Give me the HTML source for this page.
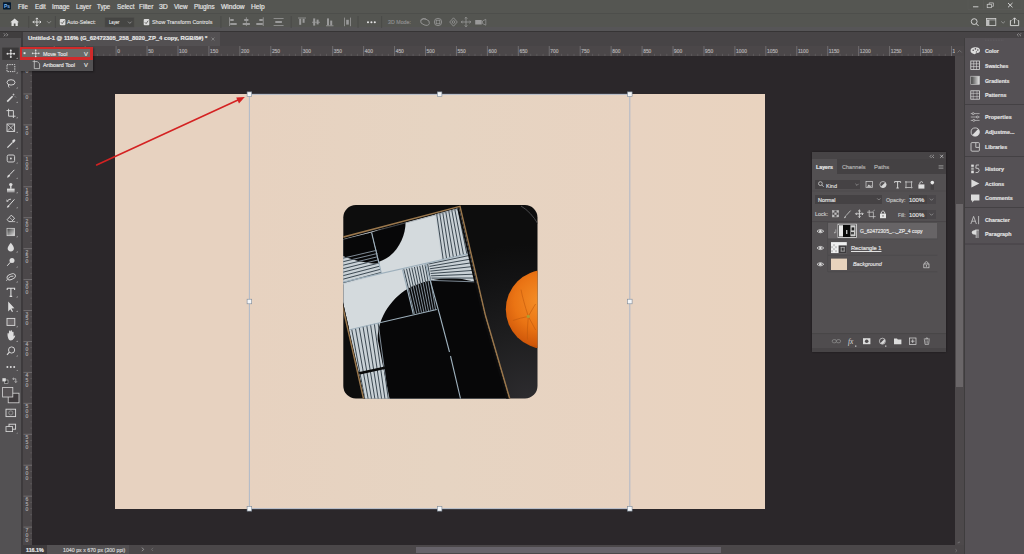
<!DOCTYPE html>
<html><head><meta charset="utf-8">
<style>
html,body{margin:0;padding:0;}
body{width:1024px;height:554px;overflow:hidden;position:relative;background:#2b272a;font-family:"Liberation Sans",sans-serif;color:#e6e6e6;}
.a{position:absolute;}
.t{position:absolute;white-space:pre;line-height:1;transform-origin:0 0;-webkit-text-stroke:0.18px currentColor;}
svg{position:absolute;left:0;top:0;}
</style></head><body>
<div class="a" style="left:0px;top:0px;width:1024px;height:13px;background:#555652;"></div>
<div class="a" style="left:0px;top:13px;width:1024px;height:1px;background:#4d4e4b;"></div>
<div class="a" style="left:0px;top:14px;width:1024px;height:17px;background:#545551;"></div>
<div class="a" style="left:0px;top:27px;width:1024px;height:4px;background:#565557;"></div>
<div class="a" style="left:0px;top:31px;width:1024px;height:1px;background:#363435;"></div>
<div class="a" style="left:21px;top:32px;width:944px;height:14px;background:#474446;"></div>
<div class="a" style="left:23px;top:32px;width:197px;height:14px;background:#535052;"></div>
<div class="a" style="left:0px;top:32px;width:21px;height:522px;background:#535153;"></div>
<div class="a" style="left:0px;top:32px;width:21px;height:6px;background:#403e3f;"></div>
<div class="a" style="left:21px;top:32px;width:2px;height:522px;background:#3d3a3c;"></div>
<div class="a" style="left:23px;top:46px;width:941px;height:10px;background:#4b4749;"></div>
<div class="a" style="left:23px;top:56px;width:9px;height:489px;background:#4b4749;"></div>
<div class="a" style="left:32px;top:56px;width:923px;height:489px;background:#2b272a;"></div>
<div class="a" style="left:955px;top:56px;width:10px;height:489px;background:#4d494b;"></div>
<div class="a" style="left:956px;top:204px;width:7px;height:183px;background:#6a6668;"></div>
<div class="a" style="left:21px;top:545px;width:944px;height:9px;background:#4b4749;"></div>
<div class="a" style="left:21px;top:545px;width:26px;height:9px;background:#3f3c3e;"></div>
<div class="a" style="left:47px;top:545px;width:82px;height:9px;background:#545153;"></div>
<div class="a" style="left:416px;top:547px;width:305px;height:6px;background:#67636a;"></div>
<div class="a" style="left:965px;top:32px;width:59px;height:6px;background:#474446;"></div>
<div class="a" style="left:964px;top:38px;width:60px;height:516px;background:#555155;"></div>
<div class="a" style="left:964px;top:38px;width:1px;height:516px;background:#3f3d3e;"></div>
<svg width="1024" height="554" viewBox="0 0 1024 554">
<defs><linearGradient id="docg" x1="0" y1="0" x2="1" y2="0"><stop offset="0" stop-color="#e7d2c0"/><stop offset="0.2" stop-color="#e7d2c0"/><stop offset="0.5" stop-color="#e6d4c2"/><stop offset="0.8" stop-color="#e8d3c1"/><stop offset="1" stop-color="#e9d3bf"/></linearGradient><radialGradient id="tbl" cx="0.95" cy="1.0" r="0.8"><stop offset="0" stop-color="#2d2c2f"/><stop offset="0.45" stop-color="#1d1d1e"/><stop offset="0.8" stop-color="#121213"/><stop offset="1" stop-color="#0d0d0d"/></radialGradient><radialGradient id="org" cx="0.45" cy="0.4" r="0.62"><stop offset="0" stop-color="#f59028"/><stop offset="0.55" stop-color="#ea7414"/><stop offset="0.9" stop-color="#d0580a"/><stop offset="1" stop-color="#a84606"/></radialGradient><clipPath id="imgc"><rect x="343.3" y="205.1" width="194.2" height="193.4" rx="12.5"/></clipPath></defs>
<rect x="115" y="94" width="650" height="415" fill="url(#docg)"/>
<defs><clipPath id="prc"><polygon points="329.50,242.60 459.00,208.00 484.30,316.00 508.20,398.00 516.00,430.00 372.00,430.00"/></clipPath><clipPath id="archc"><path d="M395.8 430 L377.7 339.6 C377.5 318 392 296 412 286.5 C428 279.5 446 276.5 462 279 C470 280.5 476 282 482 284 L530 284 L530 440 L392 440 Z"/><path d="M371.6 232.5 L405.5 220 C406.5 236 397 256 379 261.7 Z"/><path d="M327 243 L371.6 232.5 L378.7 264 C365 263 352 260 343 256 L327 252 Z"/></clipPath></defs>
<g clip-path="url(#imgc)">
<rect x="343" y="205" width="195" height="194" fill="url(#tbl)"/>
<path d="M521 206 Q531 212 538 224" fill="none" stroke="#4a4a4c" stroke-width="1"/>
<circle cx="545.2" cy="309.3" r="39.4" fill="url(#org)"/>
<g stroke="#c25a0c" stroke-width="0.8" fill="none" opacity="0.8"><path d="M528.3 316.4 Q523 300 521 289.6 M528.3 316.4 Q520 318 512.9 320.5 M528.3 316.4 Q527 330 527.4 339.6 M528.3 316.4 Q533 325 535.6 330 M528.3 316.4 Q533 308 535.6 304"/></g>
<circle cx="528.3" cy="316.4" r="1.7" fill="#b09a30"/>
<polygon points="327.90,241.10 460.00,206.30 485.50,315.80 509.50,398.00 517.50,430.00 370.60,430.00" fill="#0b0b0c" stroke="#9a774c" stroke-width="1.5"/>
<g clip-path="url(#prc)">
<polygon points="329.50,242.60 459.00,208.00 484.30,316.00 508.20,398.00 516.00,430.00 372.00,430.00" fill="#d4dadd"/>
<polygon points="330.00,259.50 376.50,248.70 381.50,274.00 330.00,288.00" fill="#c9d1d6"/>
<path d="M330.00 261.28 L376.81 250.28 M330.00 264.84 L377.44 253.44 M330.00 268.41 L378.06 256.61 M330.00 271.97 L378.69 259.77 M330.00 275.53 L379.31 262.93 M330.00 279.09 L379.94 266.09 M330.00 282.66 L380.56 269.26 M330.00 286.22 L381.19 272.42" stroke="#34404a" stroke-width="0.95"/>
<polygon points="435.00,213.00 462.00,206.00 472.00,253.00 441.50,259.80" fill="#c9d1d6"/>
<path d="M436.50 212.61 L443.19 259.42 M439.50 211.83 L446.58 258.67 M442.50 211.06 L449.97 257.91 M445.50 210.28 L453.36 257.16 M448.50 209.50 L456.75 256.40 M451.50 208.72 L460.14 255.64 M454.50 207.94 L463.53 254.89 M457.50 207.17 L466.92 254.13 M460.50 206.39 L470.31 253.38" stroke="#34404a" stroke-width="0.95"/>
<polygon points="425.50,263.50 476.00,252.00 480.00,284.00 431.40,281.50" fill="#c9d1d6"/>
<path d="M425.87 264.62 L476.25 254.00 M426.61 266.88 L476.75 258.00 M427.34 269.12 L477.25 262.00 M428.08 271.38 L477.75 266.00 M428.82 273.62 L478.25 270.00 M429.56 275.88 L478.75 274.00 M430.29 278.12 L479.25 278.00 M431.03 280.38 L479.75 282.00" stroke="#34404a" stroke-width="0.95"/>
<polygon points="402.50,269.50 429.00,263.80 436.80,309.50 413.30,314.00" fill="#c9d1d6"/>
<path d="M403.82 269.21 L414.48 313.77 M406.48 268.64 L416.82 313.32 M409.12 268.07 L419.18 312.88 M411.77 267.50 L421.53 312.43 M414.43 266.94 L423.88 311.98 M417.07 266.37 L426.23 311.52 M419.73 265.80 L428.57 311.07 M422.38 265.23 L430.93 310.62 M425.02 264.66 L433.28 310.18 M427.68 264.09 L435.62 309.73" stroke="#34404a" stroke-width="0.95"/>
<polygon points="346.00,330.40 380.00,322.60 394.00,430.00 366.00,430.00" fill="#c9d1d6"/>
<path d="M347.89 329.97 L367.56 430.00 M351.67 329.10 L370.67 430.00 M355.44 328.23 L373.78 430.00 M359.22 327.37 L376.89 430.00 M363.00 326.50 L380.00 430.00 M366.78 325.63 L383.11 430.00 M370.56 324.77 L386.22 430.00 M374.33 323.90 L389.33 430.00 M378.11 323.03 L392.44 430.00" stroke="#34404a" stroke-width="0.95"/>
<path d="M327 243 L371.6 232.5 L378.7 264 C365 263 352 260 343 256 L327 252 Z" fill="#070708"/>
<path d="M371.6 232.5 L405.5 220 C406.5 236 397 256 379 261.7 Z" fill="#070708"/>
<path d="M395.8 430 L377.7 339.6 C377.5 318 392 296 412 286.5 C428 279.5 446 276.5 462 279 C470 280.5 476 282 482 284 L530 284 L530 440 L392 440 Z" fill="#070708"/>
<g clip-path="url(#archc)">
<path d="M330.00 261.28 L376.81 250.28 M330.00 264.84 L377.44 253.44 M330.00 268.41 L378.06 256.61 M330.00 271.97 L378.69 259.77 M330.00 275.53 L379.31 262.93 M330.00 279.09 L379.94 266.09 M330.00 282.66 L380.56 269.26 M330.00 286.22 L381.19 272.42" stroke="#8c9aa6" stroke-width="0.9"/>
<path d="M425.87 264.62 L476.25 254.00 M426.61 266.88 L476.75 258.00 M427.34 269.12 L477.25 262.00 M428.08 271.38 L477.75 266.00 M428.82 273.62 L478.25 270.00 M429.56 275.88 L478.75 274.00 M430.29 278.12 L479.25 278.00 M431.03 280.38 L479.75 282.00" stroke="#8c9aa6" stroke-width="0.9"/>
<path d="M403.82 269.21 L414.48 313.77 M406.48 268.64 L416.82 313.32 M409.12 268.07 L419.18 312.88 M411.77 267.50 L421.53 312.43 M414.43 266.94 L423.88 311.98 M417.07 266.37 L426.23 311.52 M419.73 265.80 L428.57 311.07 M422.38 265.23 L430.93 310.62 M425.02 264.66 L433.28 310.18 M427.68 264.09 L435.62 309.73" stroke="#8c9aa6" stroke-width="0.9"/>
<path d="M347.89 329.97 L367.56 430.00 M351.67 329.10 L370.67 430.00 M355.44 328.23 L373.78 430.00 M359.22 327.37 L376.89 430.00 M363.00 326.50 L380.00 430.00 M366.78 325.63 L383.11 430.00 M370.56 324.77 L386.22 430.00 M374.33 323.90 L389.33 430.00 M378.11 323.03 L392.44 430.00" stroke="#8c9aa6" stroke-width="0.9"/>
</g>
<path d="M358.5 373.6 L386 367.4" stroke="#0a0a0a" stroke-width="2.6"/>
<g stroke="#9eb0bc" stroke-width="1.1" fill="none"><path d="M371.6 232.5 L381.5 274"/><path d="M330 285 L476 252"/><path d="M402.5 269.5 L413.3 314"/><path d="M425.5 263.5 L440 316 L449.5 352 M450.5 356 L462 405"/><path d="M330 334.3 L436.8 309.5"/></g>
<path d="M329 243.2 L459.6 208.6" stroke="#7d858c" stroke-width="0.5"/>
<path d="M458.6 206 L483.8 315.8 L507.8 398 L515.8 432" fill="none" stroke="#0b0b0c" stroke-width="3.6"/>
</g>
</g>
<g stroke="#9fb2cc" stroke-width="0.8" fill="none"><path d="M249.4 94 V509 M629.8 94 V509 M249.4 94.3 H629.8 M249.4 508.7 H629.8"/></g>
<rect x="247.10" y="91.90" width="4.6" height="4.6" fill="#f4f6f8" stroke="#7d8a98" stroke-width="0.6"/>
<rect x="437.30" y="91.90" width="4.6" height="4.6" fill="#f4f6f8" stroke="#7d8a98" stroke-width="0.6"/>
<rect x="627.50" y="91.90" width="4.6" height="4.6" fill="#f4f6f8" stroke="#7d8a98" stroke-width="0.6"/>
<rect x="247.10" y="299.20" width="4.6" height="4.6" fill="#f4f6f8" stroke="#7d8a98" stroke-width="0.6"/>
<rect x="627.50" y="299.20" width="4.6" height="4.6" fill="#f4f6f8" stroke="#7d8a98" stroke-width="0.6"/>
<rect x="247.10" y="506.50" width="4.6" height="4.6" fill="#f4f6f8" stroke="#7d8a98" stroke-width="0.6"/>
<rect x="437.30" y="506.50" width="4.6" height="4.6" fill="#f4f6f8" stroke="#7d8a98" stroke-width="0.6"/>
<rect x="627.50" y="506.50" width="4.6" height="4.6" fill="#f4f6f8" stroke="#7d8a98" stroke-width="0.6"/>
<path d="M96.6 165 L238 100.1" stroke="#d42222" stroke-width="1.6" stroke-linecap="round"/>
<polygon points="244.8,97 236.2,97.4 239.0,103.4" fill="#d42222"/>
</svg>
<svg width="1024" height="554" viewBox="0 0 1024 554">
<rect x="3" y="2.3" width="8" height="7.1" rx="0.6" fill="#041a30"/>
<text x="4.1" y="8.1" font-family="Liberation Sans" font-weight="bold" font-size="4.9" fill="#80b8f0">Ps</text>
<line x1="968" y1="0" x2="968" y2="9.5" stroke="#5c5d59" stroke-width="0.6"/>
<line x1="983.5" y1="0" x2="983.5" y2="9.5" stroke="#5c5d59" stroke-width="0.6"/>
<line x1="998" y1="0" x2="998" y2="9.5" stroke="#5c5d59" stroke-width="0.6"/>
<line x1="1022" y1="0" x2="1022" y2="9.5" stroke="#5c5d59" stroke-width="0.6"/>
<line x1="968" y1="9.6" x2="1022" y2="9.6" stroke="#5c5d59" stroke-width="0.6"/>
<line x1="973" y1="6.8" x2="978.4" y2="6.8" stroke="#d8d8d8" stroke-width="0.9"/>
<rect x="987.2" y="4.3" width="4.4" height="3.4" fill="none" stroke="#d0d0d0" stroke-width="0.7"/><path d="M989.2 4.3 V2.9 H993.4 V6.3 H991.6" fill="none" stroke="#d0d0d0" stroke-width="0.7"/>
<path d="M1008 3 L1012.5 7.3 M1012.5 3 L1008 7.3" stroke="#e0e0e0" stroke-width="0.9"/>
<path d="M10.3 22.3 L14.65 18.4 L19 22.3 L17.8 22.3 L17.8 26 L15.5 26 L15.5 23.6 L13.8 23.6 L13.8 26 L11.5 26 L11.5 22.3 Z" fill="#dedede"/>
<line x1="28.7" y1="16" x2="28.7" y2="28" stroke="#474845" stroke-width="0.8"/>
<line x1="55.4" y1="16" x2="55.4" y2="28" stroke="#474845" stroke-width="0.8"/>
<line x1="220.9" y1="16" x2="220.9" y2="28" stroke="#474845" stroke-width="0.8"/>
<line x1="291.2" y1="16" x2="291.2" y2="28" stroke="#474845" stroke-width="0.8"/>
<line x1="358" y1="16" x2="358" y2="28" stroke="#474845" stroke-width="0.8"/>
<line x1="381.6" y1="16" x2="381.6" y2="28" stroke="#474845" stroke-width="0.8"/>
<g stroke="#dedede" stroke-width="0.9" fill="none"><line x1="32.8" y1="22" x2="41.0" y2="22"/><line x1="36.9" y1="17.9" x2="36.9" y2="26.1"/><path d="M34.099999999999994 20.7 L32.8 22 L34.099999999999994 23.3 M39.7 20.7 L41.0 22 L39.7 23.3 M35.6 19.2 L36.9 17.9 L38.199999999999996 19.2 M35.6 24.8 L36.9 26.1 L38.199999999999996 24.8"/></g>
<path d="M47 21.2 L49 23.2 L51 21.2" fill="none" stroke="#a8a8a8" stroke-width="0.7"/>
<rect x="59.8" y="19.1" width="5.6" height="6.2" rx="1" fill="#dcdcdc"/><path d="M61.0 22.3 L62.199999999999996 23.6 L64.3 20.700000000000003" fill="none" stroke="#4a4a48" stroke-width="0.8"/>
<rect x="105" y="17.8" width="29" height="9.2" fill="#454543" stroke="#4c4c4a" stroke-width="0.5"/>
<path d="M128 21.6 L129.8 23.4 L131.6 21.6" fill="none" stroke="#a8a8a8" stroke-width="0.7"/>
<rect x="143.7" y="19.1" width="5.6" height="6.2" rx="1" fill="#dcdcdc"/><path d="M144.89999999999998 22.3 L146.1 23.6 L148.2 20.700000000000003" fill="none" stroke="#4a4a48" stroke-width="0.8"/>
<rect x="229" y="17.3" width="0.8" height="8.7" fill="#9a9a9a"/>
<rect x="230.2" y="19" width="3.5" height="2" fill="#9a9a9a"/>
<rect x="230.2" y="23" width="6.5" height="2" fill="#9a9a9a"/>
<rect x="245.9" y="17.3" width="0.8" height="8.7" fill="#9a9a9a"/>
<rect x="244.2" y="19" width="4.2" height="2" fill="#9a9a9a"/>
<rect x="242.7" y="23" width="7.2" height="2" fill="#9a9a9a"/>
<rect x="262.8" y="17.3" width="0.8" height="8.7" fill="#9a9a9a"/>
<rect x="259.3" y="19" width="3.5" height="2" fill="#9a9a9a"/>
<rect x="256.3" y="23" width="6.5" height="2" fill="#9a9a9a"/>
<rect x="273.6" y="18" width="10" height="0.8" fill="#9a9a9a"/>
<rect x="275.3" y="21" width="6.6" height="2" fill="#9a9a9a"/>
<rect x="273.6" y="25" width="10" height="0.8" fill="#9a9a9a"/>
<rect x="298" y="17.6" width="8" height="0.8" fill="#9a9a9a"/>
<rect x="299.2" y="18.8" width="2" height="6" fill="#9a9a9a"/>
<rect x="302.6" y="18.8" width="2" height="4" fill="#9a9a9a"/>
<rect x="312" y="21.8" width="8" height="0.8" fill="#9a9a9a"/>
<rect x="313.2" y="18.4" width="2" height="7.2" fill="#9a9a9a"/>
<rect x="316.6" y="19.6" width="2" height="4.8" fill="#9a9a9a"/>
<rect x="326" y="25.4" width="7.5" height="0.8" fill="#9a9a9a"/>
<rect x="327" y="18.4" width="2" height="7" fill="#9a9a9a"/>
<rect x="330.2" y="20.6" width="2" height="4.8" fill="#9a9a9a"/>
<rect x="344" y="17.6" width="0.8" height="8.6" fill="#9a9a9a"/>
<rect x="350.2" y="17.6" width="0.8" height="8.6" fill="#9a9a9a"/>
<rect x="346.2" y="19.8" width="2.6" height="4.8" fill="#9a9a9a"/>
<circle cx="368" cy="22.3" r="1.05" fill="#e4e4e4"/>
<circle cx="371.4" cy="22.3" r="1.05" fill="#e4e4e4"/>
<circle cx="374.8" cy="22.3" r="1.05" fill="#e4e4e4"/>
<g fill="none" stroke="#9a9a9a" stroke-width="0.8"><ellipse cx="425" cy="22" rx="4.6" ry="3" transform="rotate(20 425 22)"/><path d="M421 20.5 Q423 18 426 19"/><circle cx="438" cy="22" r="3.7"/><rect x="436.2" y="20.2" width="3.6" height="3.6"/><path d="M453.5 17.8 L457.3 22 L453.5 26.2 L449.7 22 Z"/><circle cx="453.5" cy="22" r="1.3"/></g>
<g stroke="#9a9a9a" stroke-width="0.8" fill="none"><line x1="461.25" y1="22" x2="470.75" y2="22"/><line x1="466" y1="17.25" x2="466" y2="26.75"/><path d="M462.55 20.7 L461.25 22 L462.55 23.3 M469.45 20.7 L470.75 22 L469.45 23.3 M464.7 18.55 L466 17.25 L467.3 18.55 M464.7 25.45 L466 26.75 L467.3 25.45"/></g>
<rect x="475.2" y="20" width="6.5" height="4.5" fill="#9a9a9a"/><path d="M482.5 21 L485.8 19.3 L485.8 25.2 L482.5 23.5Z" fill="none" stroke="#9a9a9a" stroke-width="0.7"/>
<circle cx="974.2" cy="21.6" r="2.9" fill="none" stroke="#dcdcdc" stroke-width="0.9"/><line x1="976.3" y1="23.7" x2="978.5" y2="25.9" stroke="#dcdcdc" stroke-width="1"/>
<rect x="986.5" y="18.4" width="9.3" height="7.2" fill="none" stroke="#d4d4d4" stroke-width="0.8"/><rect x="987" y="20" width="2.4" height="5.3" fill="#bdbdbd"/><line x1="986.5" y1="19.9" x2="995.8" y2="19.9" stroke="#d4d4d4" stroke-width="0.6"/>
<path d="M1001.2 21.4 L1003.1 23.2 L1005 21.4" fill="none" stroke="#a8a8a8" stroke-width="0.7"/>
<path d="M1011.5 20.6 H1010.4 V25.6 H1018.7 V20.6 H1017.6" fill="none" stroke="#e0e0e0" stroke-width="0.9"/><path d="M1014.55 23.6 V18 M1012.8 19.6 L1014.55 17.8 L1016.3 19.6" fill="none" stroke="#e0e0e0" stroke-width="0.9"/>
<path d="M211.6 37.6 L214.4 40.4 M214.4 37.6 L211.6 40.4" stroke="#9c9c9c" stroke-width="0.6"/>
<path d="M3.8 33.3 L5.3 34.8 L3.8 36.3 M6.3 33.3 L7.8 34.8 L6.3 36.3" fill="none" stroke="#bdbdbd" stroke-width="0.6"/>
<rect x="2.2" y="47.6" width="16.6" height="12.3" fill="#3a3839"/>
<path d="M16.2 58.900000000000006 L17.6 58.900000000000006 L17.6 57.5 Z" fill="#bdbdbd"/>
<path d="M16.2 73.4 L17.6 73.4 L17.6 72.0 Z" fill="#bdbdbd"/>
<path d="M16.2 88.5 L17.6 88.5 L17.6 87.1 Z" fill="#bdbdbd"/>
<path d="M16.2 103.0 L17.6 103.0 L17.6 101.6 Z" fill="#bdbdbd"/>
<path d="M16.2 118.2 L17.6 118.2 L17.6 116.8 Z" fill="#bdbdbd"/>
<path d="M16.2 132.9 L17.6 132.9 L17.6 131.5 Z" fill="#bdbdbd"/>
<path d="M16.2 148.79999999999998 L17.6 148.79999999999998 L17.6 147.4 Z" fill="#bdbdbd"/>
<path d="M16.2 163.6 L17.6 163.6 L17.6 162.20000000000002 Z" fill="#bdbdbd"/>
<path d="M16.2 178.79999999999998 L17.6 178.79999999999998 L17.6 177.4 Z" fill="#bdbdbd"/>
<path d="M16.2 193.2 L17.6 193.2 L17.6 191.8 Z" fill="#bdbdbd"/>
<path d="M16.2 208.2 L17.6 208.2 L17.6 206.8 Z" fill="#bdbdbd"/>
<path d="M16.2 222.79999999999998 L17.6 222.79999999999998 L17.6 221.4 Z" fill="#bdbdbd"/>
<path d="M16.2 237.2 L17.6 237.2 L17.6 235.8 Z" fill="#bdbdbd"/>
<path d="M16.2 252.39999999999998 L17.6 252.39999999999998 L17.6 251.0 Z" fill="#bdbdbd"/>
<path d="M16.2 267.59999999999997 L17.6 267.59999999999997 L17.6 266.2 Z" fill="#bdbdbd"/>
<path d="M16.2 282.4 L17.6 282.4 L17.6 281.0 Z" fill="#bdbdbd"/>
<path d="M16.2 297.5 L17.6 297.5 L17.6 296.1 Z" fill="#bdbdbd"/>
<path d="M16.2 312.0 L17.6 312.0 L17.6 310.6 Z" fill="#bdbdbd"/>
<path d="M16.2 327.2 L17.6 327.2 L17.6 325.8 Z" fill="#bdbdbd"/>
<path d="M16.2 342.0 L17.6 342.0 L17.6 340.6 Z" fill="#bdbdbd"/>
<path d="M16.2 356.4 L17.6 356.4 L17.6 355.0 Z" fill="#bdbdbd"/>
<g fill="#dcdcdc"><circle cx="10.8" cy="53.7" r="1.1"/><circle cx="7.5" cy="53.7" r="1"/><circle cx="14.1" cy="53.7" r="1"/><circle cx="10.8" cy="50.4" r="1"/><circle cx="10.8" cy="57" r="1"/></g><path d="M7.5 53.7 H14.1 M10.8 50.4 V57" stroke="#dcdcdc" stroke-width="0.7"/>
<rect x="7" y="64.6" width="7.8" height="7" fill="none" stroke="#dcdcdc" stroke-width="0.9" stroke-dasharray="1.4 0.9"/>
<ellipse cx="11" cy="82.4" rx="4" ry="2.7" fill="none" stroke="#dcdcdc" stroke-width="0.9"/><path d="M8.6 84.6 Q8 86.5 9.2 87.5" fill="none" stroke="#dcdcdc" stroke-width="0.9"/>
<path d="M7.2 101.6 L12.6 96.2" stroke="#dcdcdc" stroke-width="1.6"/><path d="M13.5 93.6 V95.6 M12.5 94.6 H14.5 M15 96.5 L15.8 97.3" stroke="#dcdcdc" stroke-width="0.6"/>
<path d="M8.6 108.8 V116.2 H15.5 M6.5 110.6 H13.4 V118" fill="none" stroke="#dcdcdc" stroke-width="0.9"/>
<rect x="7" y="124" width="7.6" height="7.4" fill="none" stroke="#dcdcdc" stroke-width="0.9"/><path d="M7.5 124.5 L14.1 130.9 M14.1 124.5 L7.5 130.9" stroke="#dcdcdc" stroke-width="0.7"/>
<path d="M7.4 147.6 L12.6 142.4" stroke="#dcdcdc" stroke-width="1.2"/><path d="M12 141 L13.2 139.8 Q14.4 138.8 15.2 139.8 Q15.8 140.8 14.6 141.8 L13.4 143" fill="#dcdcdc"/>
<rect x="7.2" y="155" width="7.4" height="7" rx="1.5" fill="none" stroke="#dcdcdc" stroke-width="0.9"/><circle cx="10.9" cy="158.5" r="0.9" fill="#dcdcdc"/>
<path d="M9.6 174.8 L14.4 169.8" stroke="#dcdcdc" stroke-width="1"/><path d="M7 177.8 Q7.4 175.2 9.2 174.6 L10.2 175.6 Q9.6 177.6 7 177.8Z" fill="#dcdcdc"/>
<circle cx="10.8" cy="184.6" r="1.7" fill="#dcdcdc"/><rect x="10.1" y="185.8" width="1.4" height="3" fill="#dcdcdc"/><rect x="7" y="188.6" width="7.6" height="2.2" fill="#dcdcdc"/><rect x="7" y="191.4" width="7.6" height="0.8" fill="#dcdcdc"/>
<path d="M9 205.5 L14.4 199.4" stroke="#dcdcdc" stroke-width="1"/><path d="M6.8 207.8 Q7 205.6 8.8 205 L9.6 205.9 Q9 207.6 6.8 207.8Z" fill="#dcdcdc"/><path d="M7 201.5 Q8.2 198.8 11 199.2" fill="none" stroke="#dcdcdc" stroke-width="0.9"/><path d="M6.6 199.6 L7 201.6 L8.8 200.8" stroke="#dcdcdc" stroke-width="0.6" fill="none"/>
<path d="M7.2 219.6 L11.2 215.2 L14.6 218.2 L11.6 221.6 H8.8 Z" fill="none" stroke="#dcdcdc" stroke-width="0.9"/><path d="M11.6 221.6 H15.2" stroke="#dcdcdc" stroke-width="0.7"/><path d="M9.4 217.4 L12.6 220.3" stroke="#dcdcdc" stroke-width="0.6"/>
<defs><linearGradient id="tg" x1="0" y1="0" x2="1" y2="1"><stop offset="0" stop-color="#3a3a3a"/><stop offset="1" stop-color="#e0e0e0"/></linearGradient></defs>
<rect x="7" y="228.3" width="7.6" height="7.4" fill="url(#tg)" stroke="#dcdcdc" stroke-width="0.7"/>
<path d="M10.8 242.8 Q13.9 246.4 13.9 248.6 Q13.9 251.4 10.8 251.4 Q7.7 251.4 7.7 248.6 Q7.7 246.4 10.8 242.8Z" fill="#dcdcdc"/>
<circle cx="12" cy="260.6" r="2.5" fill="#dcdcdc"/><path d="M10.4 262.2 L7.2 265.8" stroke="#dcdcdc" stroke-width="1"/>
<ellipse cx="11.2" cy="276.8" rx="4.4" ry="2.6" transform="rotate(-25 11.2 276.8)" fill="none" stroke="#dcdcdc" stroke-width="0.9"/><path d="M8.2 278.4 Q10.6 275.4 13.4 276.2" fill="none" stroke="#dcdcdc" stroke-width="0.9"/><path d="M7 279.6 L6.4 281" stroke="#dcdcdc" stroke-width="0.7"/>
<path d="M7.2 288.2 H14.6 V290 M7.2 288.2 V290 M10.9 288.2 V296.4 M9.6 296.4 H12.2" fill="none" stroke="#dcdcdc" stroke-width="1.1"/>
<path d="M8.2 301.6 L8.2 311.4 L10.3 309.2 L12 312 L13 311.4 L11.5 308.6 L14.4 308.3 Z" fill="#dcdcdc"/>
<rect x="7" y="318.4" width="7.8" height="7" fill="#6a6668" stroke="#dcdcdc" stroke-width="0.9"/>
<path d="M7.6 336 Q7.2 333 8 332.8 Q8.7 332.6 8.9 334.6 L9 331.4 Q9.2 330.4 9.9 330.6 Q10.5 330.8 10.4 332 L10.6 330.8 Q10.9 330 11.6 330.3 Q12.1 330.6 12 331.8 L12.2 332.2 Q12.6 331.4 13.2 331.7 Q13.7 332 13.6 333.4 L13.6 336.4 Q14.6 335 15.2 335.6 Q15.4 336.2 14.4 337.8 Q12.8 340.6 10.8 340.6 Q8.4 340.6 7.6 336Z" fill="#dcdcdc"/>
<circle cx="11.6" cy="350" r="3.1" fill="none" stroke="#dcdcdc" stroke-width="0.9"/><path d="M9.4 352.2 L7 354.8" stroke="#dcdcdc" stroke-width="1.1"/>
<circle cx="7.4" cy="367" r="1" fill="#dcdcdc"/>
<circle cx="10.8" cy="367" r="1" fill="#dcdcdc"/>
<circle cx="14.2" cy="367" r="1" fill="#dcdcdc"/>
<path d="M16.4 371 L17.6 371 L17.6 369.8Z" fill="#bdbdbd"/>
<rect x="4.4" y="380" width="3.6" height="3.4" fill="#3a3a3a" stroke="#dcdcdc" stroke-width="0.5"/><rect x="2.4" y="378.2" width="3.4" height="3.2" fill="#dcdcdc"/>
<path d="M13 378.8 H15.8 V382.4 M14.6 381.3 L15.8 382.6 L17 381.3 M13.9 377.8 L12.6 378.8 L13.9 379.8" fill="none" stroke="#dcdcdc" stroke-width="0.6"/>
<rect x="8.2" y="393.2" width="10.8" height="9.6" fill="#3e3a3c" stroke="#d8d8d8" stroke-width="0.8"/>
<rect x="2.6" y="387.4" width="10.2" height="9.6" fill="#565254" stroke="#d8d8d8" stroke-width="0.8"/>
<rect x="6" y="409.2" width="9.6" height="7.4" fill="none" stroke="#dcdcdc" stroke-width="0.9" stroke-width="0.8"/><circle cx="10.8" cy="412.9" r="2.1" fill="none" stroke="#a0a0a0" stroke-width="0.7"/>
<rect x="9" y="424.2" width="6.6" height="5" fill="none" stroke="#dcdcdc" stroke-width="0.9" stroke-width="0.8"/><rect x="6" y="426.6" width="6.6" height="5" fill="#535153" stroke="#dcdcdc" stroke-width="0.8"/>
<path d="M16.4 433.6 L17.6 433.6 L17.6 432.4Z" fill="#bdbdbd"/>
<path d="M54.22 46 V56 M85.16 46 V56 M116.10 46 V56 M147.04 46 V56 M177.98 46 V56 M208.92 46 V56 M239.86 46 V56 M270.80 46 V56 M301.74 46 V56 M332.68 46 V56 M363.62 46 V56 M394.56 46 V56 M425.50 46 V56 M456.44 46 V56 M487.38 46 V56 M518.32 46 V56 M549.26 46 V56 M580.20 46 V56 M611.14 46 V56 M642.08 46 V56 M673.02 46 V56 M703.96 46 V56 M734.90 46 V56 M765.84 46 V56 M796.78 46 V56 M827.72 46 V56 M858.66 46 V56 M889.60 46 V56 M920.54 46 V56 M951.48 46 V56" stroke="#8a8688" stroke-width="0.6"/>
<path d="M29.47 53.8 V56 M35.66 53.8 V56 M41.84 53.8 V56 M48.03 53.8 V56 M60.41 53.8 V56 M66.60 53.8 V56 M72.78 53.8 V56 M78.97 53.8 V56 M91.35 53.8 V56 M97.54 53.8 V56 M103.72 53.8 V56 M109.91 53.8 V56 M122.29 53.8 V56 M128.48 53.8 V56 M134.66 53.8 V56 M140.85 53.8 V56 M153.23 53.8 V56 M159.42 53.8 V56 M165.60 53.8 V56 M171.79 53.8 V56 M184.17 53.8 V56 M190.36 53.8 V56 M196.54 53.8 V56 M202.73 53.8 V56 M215.11 53.8 V56 M221.30 53.8 V56 M227.48 53.8 V56 M233.67 53.8 V56 M246.05 53.8 V56 M252.24 53.8 V56 M258.42 53.8 V56 M264.61 53.8 V56 M276.99 53.8 V56 M283.18 53.8 V56 M289.36 53.8 V56 M295.55 53.8 V56 M307.93 53.8 V56 M314.12 53.8 V56 M320.30 53.8 V56 M326.49 53.8 V56 M338.87 53.8 V56 M345.06 53.8 V56 M351.24 53.8 V56 M357.43 53.8 V56 M369.81 53.8 V56 M376.00 53.8 V56 M382.18 53.8 V56 M388.37 53.8 V56 M400.75 53.8 V56 M406.94 53.8 V56 M413.12 53.8 V56 M419.31 53.8 V56 M431.69 53.8 V56 M437.88 53.8 V56 M444.06 53.8 V56 M450.25 53.8 V56 M462.63 53.8 V56 M468.82 53.8 V56 M475.00 53.8 V56 M481.19 53.8 V56 M493.57 53.8 V56 M499.76 53.8 V56 M505.94 53.8 V56 M512.13 53.8 V56 M524.51 53.8 V56 M530.70 53.8 V56 M536.88 53.8 V56 M543.07 53.8 V56 M555.45 53.8 V56 M561.64 53.8 V56 M567.82 53.8 V56 M574.01 53.8 V56 M586.39 53.8 V56 M592.58 53.8 V56 M598.76 53.8 V56 M604.95 53.8 V56 M617.33 53.8 V56 M623.52 53.8 V56 M629.70 53.8 V56 M635.89 53.8 V56 M648.27 53.8 V56 M654.46 53.8 V56 M660.64 53.8 V56 M666.83 53.8 V56 M679.21 53.8 V56 M685.40 53.8 V56 M691.58 53.8 V56 M697.77 53.8 V56 M710.15 53.8 V56 M716.34 53.8 V56 M722.52 53.8 V56 M728.71 53.8 V56 M741.09 53.8 V56 M747.28 53.8 V56 M753.46 53.8 V56 M759.65 53.8 V56 M772.03 53.8 V56 M778.22 53.8 V56 M784.40 53.8 V56 M790.59 53.8 V56 M802.97 53.8 V56 M809.16 53.8 V56 M815.34 53.8 V56 M821.53 53.8 V56 M833.91 53.8 V56 M840.10 53.8 V56 M846.28 53.8 V56 M852.47 53.8 V56 M864.85 53.8 V56 M871.04 53.8 V56 M877.22 53.8 V56 M883.41 53.8 V56 M895.79 53.8 V56 M901.98 53.8 V56 M908.16 53.8 V56 M914.35 53.8 V56 M926.73 53.8 V56 M932.92 53.8 V56 M939.10 53.8 V56 M945.29 53.8 V56" stroke="#6e6a6c" stroke-width="0.5"/>
</svg>
<span class="t" style="left:18.39px;top:4.00px;font-size:6.4px;font-weight:400;font-style:normal;color:#e4e4e4;transform:scaleX(0.961);">File</span>
<span class="t" style="left:34.59px;top:4.00px;font-size:6.4px;font-weight:400;font-style:normal;color:#e4e4e4;transform:scaleX(0.973);">Edit</span>
<span class="t" style="left:51.68px;top:4.00px;font-size:6.4px;font-weight:400;font-style:normal;color:#e4e4e4;transform:scaleX(0.993);">Image</span>
<span class="t" style="left:75.70px;top:4.00px;font-size:6.4px;font-weight:400;font-style:normal;color:#e4e4e4;transform:scaleX(0.951);">Layer</span>
<span class="t" style="left:97.09px;top:4.00px;font-size:6.4px;font-weight:400;font-style:normal;color:#e4e4e4;transform:scaleX(0.953);">Type</span>
<span class="t" style="left:116.69px;top:4.00px;font-size:6.4px;font-weight:400;font-style:normal;color:#e4e4e4;transform:scaleX(0.981);">Select</span>
<span class="t" style="left:139.48px;top:4.00px;font-size:6.4px;font-weight:400;font-style:normal;color:#e4e4e4;transform:scaleX(1.010);">Filter</span>
<span class="t" style="left:159.45px;top:4.00px;font-size:6.4px;font-weight:400;font-style:normal;color:#e4e4e4;transform:scaleX(1.089);">3D</span>
<span class="t" style="left:174.18px;top:4.00px;font-size:6.4px;font-weight:400;font-style:normal;color:#e4e4e4;transform:scaleX(0.992);">View</span>
<span class="t" style="left:194.29px;top:4.00px;font-size:6.4px;font-weight:400;font-style:normal;color:#e4e4e4;transform:scaleX(0.979);">Plugins</span>
<span class="t" style="left:220.67px;top:4.00px;font-size:6.4px;font-weight:400;font-style:normal;color:#e4e4e4;transform:scaleX(1.041);">Window</span>
<span class="t" style="left:250.67px;top:4.00px;font-size:6.4px;font-weight:400;font-style:normal;color:#e4e4e4;transform:scaleX(1.039);">Help</span>
<span class="t" style="left:67.43px;top:19.00px;font-size:6.2px;font-weight:400;font-style:normal;color:#dcdcdc;transform:scaleX(0.855);">Auto-Select:</span>
<span class="t" style="left:109.19px;top:19.00px;font-size:6.0px;font-weight:400;font-style:normal;color:#dcdcdc;transform:scaleX(0.701);">Layer</span>
<span class="t" style="left:151.73px;top:19.00px;font-size:6.2px;font-weight:400;font-style:normal;color:#dcdcdc;transform:scaleX(0.864);">Show Transform Controls</span>
<span class="t" style="left:388.34px;top:19.00px;font-size:6.0px;font-weight:400;font-style:normal;color:#8e8e8e;transform:scaleX(0.881);">3D Mode:</span>
<span class="t" style="left:28.01px;top:36.00px;font-size:5.8px;font-weight:700;font-style:normal;color:#e8e8e8;transform:scaleX(1.008);">Untitled-1 @ 116% (G_62472305_258_8020_ZP_4 copy, RGB/8#) *</span>
<span class="t" style="left:55.32px;top:50.00px;font-size:4.9px;font-weight:400;font-style:normal;color:#b3b0b2;transform:scaleX(1.000);">100</span>
<span class="t" style="left:86.26px;top:50.00px;font-size:4.9px;font-weight:400;font-style:normal;color:#b3b0b2;transform:scaleX(1.000);">50</span>
<span class="t" style="left:117.20px;top:50.00px;font-size:4.9px;font-weight:400;font-style:normal;color:#b3b0b2;transform:scaleX(1.000);">0</span>
<span class="t" style="left:148.14px;top:50.00px;font-size:4.9px;font-weight:400;font-style:normal;color:#b3b0b2;transform:scaleX(1.000);">50</span>
<span class="t" style="left:179.08px;top:50.00px;font-size:4.9px;font-weight:400;font-style:normal;color:#b3b0b2;transform:scaleX(1.000);">100</span>
<span class="t" style="left:210.02px;top:50.00px;font-size:4.9px;font-weight:400;font-style:normal;color:#b3b0b2;transform:scaleX(1.000);">150</span>
<span class="t" style="left:240.96px;top:50.00px;font-size:4.9px;font-weight:400;font-style:normal;color:#b3b0b2;transform:scaleX(1.000);">200</span>
<span class="t" style="left:271.90px;top:50.00px;font-size:4.9px;font-weight:400;font-style:normal;color:#b3b0b2;transform:scaleX(1.000);">250</span>
<span class="t" style="left:302.84px;top:50.00px;font-size:4.9px;font-weight:400;font-style:normal;color:#b3b0b2;transform:scaleX(1.000);">300</span>
<span class="t" style="left:333.78px;top:50.00px;font-size:4.9px;font-weight:400;font-style:normal;color:#b3b0b2;transform:scaleX(1.000);">350</span>
<span class="t" style="left:364.72px;top:50.00px;font-size:4.9px;font-weight:400;font-style:normal;color:#b3b0b2;transform:scaleX(1.000);">400</span>
<span class="t" style="left:395.66px;top:50.00px;font-size:4.9px;font-weight:400;font-style:normal;color:#b3b0b2;transform:scaleX(1.000);">450</span>
<span class="t" style="left:426.60px;top:50.00px;font-size:4.9px;font-weight:400;font-style:normal;color:#b3b0b2;transform:scaleX(1.000);">500</span>
<span class="t" style="left:457.54px;top:50.00px;font-size:4.9px;font-weight:400;font-style:normal;color:#b3b0b2;transform:scaleX(1.000);">550</span>
<span class="t" style="left:488.48px;top:50.00px;font-size:4.9px;font-weight:400;font-style:normal;color:#b3b0b2;transform:scaleX(1.000);">600</span>
<span class="t" style="left:519.42px;top:50.00px;font-size:4.9px;font-weight:400;font-style:normal;color:#b3b0b2;transform:scaleX(1.000);">650</span>
<span class="t" style="left:550.36px;top:50.00px;font-size:4.9px;font-weight:400;font-style:normal;color:#b3b0b2;transform:scaleX(1.000);">700</span>
<span class="t" style="left:581.30px;top:50.00px;font-size:4.9px;font-weight:400;font-style:normal;color:#b3b0b2;transform:scaleX(1.000);">750</span>
<span class="t" style="left:612.24px;top:50.00px;font-size:4.9px;font-weight:400;font-style:normal;color:#b3b0b2;transform:scaleX(1.000);">800</span>
<span class="t" style="left:643.18px;top:50.00px;font-size:4.9px;font-weight:400;font-style:normal;color:#b3b0b2;transform:scaleX(1.000);">850</span>
<span class="t" style="left:674.12px;top:50.00px;font-size:4.9px;font-weight:400;font-style:normal;color:#b3b0b2;transform:scaleX(1.000);">900</span>
<span class="t" style="left:705.06px;top:50.00px;font-size:4.9px;font-weight:400;font-style:normal;color:#b3b0b2;transform:scaleX(1.000);">950</span>
<span class="t" style="left:736.00px;top:50.00px;font-size:4.9px;font-weight:400;font-style:normal;color:#b3b0b2;transform:scaleX(1.000);">1000</span>
<span class="t" style="left:766.94px;top:50.00px;font-size:4.9px;font-weight:400;font-style:normal;color:#b3b0b2;transform:scaleX(1.000);">1050</span>
<span class="t" style="left:797.88px;top:50.00px;font-size:4.9px;font-weight:400;font-style:normal;color:#b3b0b2;transform:scaleX(1.000);">1100</span>
<span class="t" style="left:828.82px;top:50.00px;font-size:4.9px;font-weight:400;font-style:normal;color:#b3b0b2;transform:scaleX(1.000);">1150</span>
<span class="t" style="left:859.76px;top:50.00px;font-size:4.9px;font-weight:400;font-style:normal;color:#b3b0b2;transform:scaleX(1.000);">1200</span>
<span class="t" style="left:890.70px;top:50.00px;font-size:4.9px;font-weight:400;font-style:normal;color:#b3b0b2;transform:scaleX(1.000);">1250</span>
<span class="t" style="left:921.64px;top:50.00px;font-size:4.9px;font-weight:400;font-style:normal;color:#b3b0b2;transform:scaleX(1.000);">1300</span>
<span class="t" style="left:952.58px;top:50.00px;font-size:4.9px;font-weight:400;font-style:normal;color:#b3b0b2;transform:scaleX(1.000);">1350</span>
<div class="a" style="left:955px;top:46px;width:9px;height:10px;background:#4b4749;"></div>
<svg width="1024" height="554" viewBox="0 0 1024 554">
<path d="M957.6 52.4 L959.6 50.4 L961.6 52.4" fill="none" stroke="#8a8a8a" stroke-width="0.6"/>
</svg>
<svg width="1024" height="554" viewBox="0 0 1024 554">
<path d="M23.5 63.01 H32 M23.5 93.95 H32 M23.5 124.89 H32 M23.5 155.83 H32 M23.5 186.77 H32 M23.5 217.71 H32 M23.5 248.65 H32 M23.5 279.59 H32 M23.5 310.53 H32 M23.5 341.47 H32 M23.5 372.41 H32 M23.5 403.35 H32 M23.5 434.29 H32 M23.5 465.23 H32 M23.5 496.17 H32 M23.5 527.11 H32" stroke="#8a8688" stroke-width="0.6"/>
<path d="M30.2 56.82 H32 M30.2 69.20 H32 M30.2 75.39 H32 M30.2 81.57 H32 M30.2 87.76 H32 M30.2 100.14 H32 M30.2 106.33 H32 M30.2 112.51 H32 M30.2 118.70 H32 M30.2 131.08 H32 M30.2 137.27 H32 M30.2 143.45 H32 M30.2 149.64 H32 M30.2 162.02 H32 M30.2 168.21 H32 M30.2 174.39 H32 M30.2 180.58 H32 M30.2 192.96 H32 M30.2 199.15 H32 M30.2 205.33 H32 M30.2 211.52 H32 M30.2 223.90 H32 M30.2 230.09 H32 M30.2 236.27 H32 M30.2 242.46 H32 M30.2 254.84 H32 M30.2 261.03 H32 M30.2 267.21 H32 M30.2 273.40 H32 M30.2 285.78 H32 M30.2 291.97 H32 M30.2 298.15 H32 M30.2 304.34 H32 M30.2 316.72 H32 M30.2 322.91 H32 M30.2 329.09 H32 M30.2 335.28 H32 M30.2 347.66 H32 M30.2 353.85 H32 M30.2 360.03 H32 M30.2 366.22 H32 M30.2 378.60 H32 M30.2 384.79 H32 M30.2 390.97 H32 M30.2 397.16 H32 M30.2 409.54 H32 M30.2 415.73 H32 M30.2 421.91 H32 M30.2 428.10 H32 M30.2 440.48 H32 M30.2 446.67 H32 M30.2 452.85 H32 M30.2 459.04 H32 M30.2 471.42 H32 M30.2 477.61 H32 M30.2 483.79 H32 M30.2 489.98 H32 M30.2 502.36 H32 M30.2 508.55 H32 M30.2 514.73 H32 M30.2 520.92 H32 M30.2 533.30 H32 M30.2 539.49 H32" stroke="#6e6a6c" stroke-width="0.5"/>
</svg>
<span class="t" style="left:25.60px;top:64.00px;font-size:5.0px;font-weight:400;font-style:normal;color:#a9a6a8;transform:scaleX(1.000);">5</span>
<span class="t" style="left:25.60px;top:69.00px;font-size:5.0px;font-weight:400;font-style:normal;color:#a9a6a8;transform:scaleX(1.000);">0</span>
<span class="t" style="left:25.60px;top:95.00px;font-size:5.0px;font-weight:400;font-style:normal;color:#a9a6a8;transform:scaleX(1.000);">0</span>
<span class="t" style="left:25.60px;top:126.00px;font-size:5.0px;font-weight:400;font-style:normal;color:#a9a6a8;transform:scaleX(1.000);">5</span>
<span class="t" style="left:25.60px;top:131.00px;font-size:5.0px;font-weight:400;font-style:normal;color:#a9a6a8;transform:scaleX(1.000);">0</span>
<span class="t" style="left:25.60px;top:157.00px;font-size:5.0px;font-weight:400;font-style:normal;color:#a9a6a8;transform:scaleX(1.000);">1</span>
<span class="t" style="left:25.60px;top:162.00px;font-size:5.0px;font-weight:400;font-style:normal;color:#a9a6a8;transform:scaleX(1.000);">0</span>
<span class="t" style="left:25.60px;top:166.00px;font-size:5.0px;font-weight:400;font-style:normal;color:#a9a6a8;transform:scaleX(1.000);">0</span>
<span class="t" style="left:25.60px;top:188.00px;font-size:5.0px;font-weight:400;font-style:normal;color:#a9a6a8;transform:scaleX(1.000);">1</span>
<span class="t" style="left:25.60px;top:192.00px;font-size:5.0px;font-weight:400;font-style:normal;color:#a9a6a8;transform:scaleX(1.000);">5</span>
<span class="t" style="left:25.60px;top:197.00px;font-size:5.0px;font-weight:400;font-style:normal;color:#a9a6a8;transform:scaleX(1.000);">0</span>
<span class="t" style="left:25.60px;top:219.00px;font-size:5.0px;font-weight:400;font-style:normal;color:#a9a6a8;transform:scaleX(1.000);">2</span>
<span class="t" style="left:25.60px;top:223.00px;font-size:5.0px;font-weight:400;font-style:normal;color:#a9a6a8;transform:scaleX(1.000);">0</span>
<span class="t" style="left:25.60px;top:228.00px;font-size:5.0px;font-weight:400;font-style:normal;color:#a9a6a8;transform:scaleX(1.000);">0</span>
<span class="t" style="left:25.60px;top:250.00px;font-size:5.0px;font-weight:400;font-style:normal;color:#a9a6a8;transform:scaleX(1.000);">2</span>
<span class="t" style="left:25.60px;top:254.00px;font-size:5.0px;font-weight:400;font-style:normal;color:#a9a6a8;transform:scaleX(1.000);">5</span>
<span class="t" style="left:25.60px;top:259.00px;font-size:5.0px;font-weight:400;font-style:normal;color:#a9a6a8;transform:scaleX(1.000);">0</span>
<span class="t" style="left:25.60px;top:281.00px;font-size:5.0px;font-weight:400;font-style:normal;color:#a9a6a8;transform:scaleX(1.000);">3</span>
<span class="t" style="left:25.60px;top:285.00px;font-size:5.0px;font-weight:400;font-style:normal;color:#a9a6a8;transform:scaleX(1.000);">0</span>
<span class="t" style="left:25.60px;top:290.00px;font-size:5.0px;font-weight:400;font-style:normal;color:#a9a6a8;transform:scaleX(1.000);">0</span>
<span class="t" style="left:25.60px;top:312.00px;font-size:5.0px;font-weight:400;font-style:normal;color:#a9a6a8;transform:scaleX(1.000);">3</span>
<span class="t" style="left:25.60px;top:316.00px;font-size:5.0px;font-weight:400;font-style:normal;color:#a9a6a8;transform:scaleX(1.000);">5</span>
<span class="t" style="left:25.60px;top:321.00px;font-size:5.0px;font-weight:400;font-style:normal;color:#a9a6a8;transform:scaleX(1.000);">0</span>
<span class="t" style="left:25.60px;top:342.00px;font-size:5.0px;font-weight:400;font-style:normal;color:#a9a6a8;transform:scaleX(1.000);">4</span>
<span class="t" style="left:25.60px;top:347.00px;font-size:5.0px;font-weight:400;font-style:normal;color:#a9a6a8;transform:scaleX(1.000);">0</span>
<span class="t" style="left:25.60px;top:352.00px;font-size:5.0px;font-weight:400;font-style:normal;color:#a9a6a8;transform:scaleX(1.000);">0</span>
<span class="t" style="left:25.60px;top:373.00px;font-size:5.0px;font-weight:400;font-style:normal;color:#a9a6a8;transform:scaleX(1.000);">4</span>
<span class="t" style="left:25.60px;top:378.00px;font-size:5.0px;font-weight:400;font-style:normal;color:#a9a6a8;transform:scaleX(1.000);">5</span>
<span class="t" style="left:25.60px;top:383.00px;font-size:5.0px;font-weight:400;font-style:normal;color:#a9a6a8;transform:scaleX(1.000);">0</span>
<span class="t" style="left:25.60px;top:404.00px;font-size:5.0px;font-weight:400;font-style:normal;color:#a9a6a8;transform:scaleX(1.000);">5</span>
<span class="t" style="left:25.60px;top:409.00px;font-size:5.0px;font-weight:400;font-style:normal;color:#a9a6a8;transform:scaleX(1.000);">0</span>
<span class="t" style="left:25.60px;top:414.00px;font-size:5.0px;font-weight:400;font-style:normal;color:#a9a6a8;transform:scaleX(1.000);">0</span>
<span class="t" style="left:25.60px;top:435.00px;font-size:5.0px;font-weight:400;font-style:normal;color:#a9a6a8;transform:scaleX(1.000);">5</span>
<span class="t" style="left:25.60px;top:440.00px;font-size:5.0px;font-weight:400;font-style:normal;color:#a9a6a8;transform:scaleX(1.000);">5</span>
<span class="t" style="left:25.60px;top:445.00px;font-size:5.0px;font-weight:400;font-style:normal;color:#a9a6a8;transform:scaleX(1.000);">0</span>
<span class="t" style="left:25.60px;top:466.00px;font-size:5.0px;font-weight:400;font-style:normal;color:#a9a6a8;transform:scaleX(1.000);">6</span>
<span class="t" style="left:25.60px;top:471.00px;font-size:5.0px;font-weight:400;font-style:normal;color:#a9a6a8;transform:scaleX(1.000);">0</span>
<span class="t" style="left:25.60px;top:476.00px;font-size:5.0px;font-weight:400;font-style:normal;color:#a9a6a8;transform:scaleX(1.000);">0</span>
<span class="t" style="left:25.60px;top:497.00px;font-size:5.0px;font-weight:400;font-style:normal;color:#a9a6a8;transform:scaleX(1.000);">6</span>
<span class="t" style="left:25.60px;top:502.00px;font-size:5.0px;font-weight:400;font-style:normal;color:#a9a6a8;transform:scaleX(1.000);">5</span>
<span class="t" style="left:25.60px;top:507.00px;font-size:5.0px;font-weight:400;font-style:normal;color:#a9a6a8;transform:scaleX(1.000);">0</span>
<span class="t" style="left:25.60px;top:528.00px;font-size:5.0px;font-weight:400;font-style:normal;color:#a9a6a8;transform:scaleX(1.000);">7</span>
<span class="t" style="left:25.60px;top:533.00px;font-size:5.0px;font-weight:400;font-style:normal;color:#a9a6a8;transform:scaleX(1.000);">0</span>
<span class="t" style="left:25.60px;top:538.00px;font-size:5.0px;font-weight:400;font-style:normal;color:#a9a6a8;transform:scaleX(1.000);">0</span>
<div class="a" style="left:20px;top:47px;width:72.5px;height:23.5px;background:#535153;box-shadow:1px 1px 2px rgba(0,0,0,0.35);"></div>
<div class="a" style="left:20px;top:47px;width:72.5px;height:12.5px;background:#d02a2a;"></div>
<div class="a" style="left:22.2px;top:49.2px;width:68.1px;height:8.1px;background:#6a6a68;"></div>
<svg width="1024" height="554" viewBox="0 0 1024 554">
<rect x="23.6" y="52.2" width="1.9" height="1.9" fill="#e8e8e8"/>
<g fill="#dcdcdc"><circle cx="35.7" cy="53.4" r="0.9"/><circle cx="32.6" cy="53.4" r="0.8"/><circle cx="38.8" cy="53.4" r="0.8"/><circle cx="35.7" cy="50.3" r="0.8"/><circle cx="35.7" cy="56.5" r="0.8"/></g><path d="M32.6 53.4 H38.8 M35.7 50.3 V56.5" stroke="#dcdcdc" stroke-width="0.6"/>
<path d="M34.3 61.2 V68.6 H39.6 V63.8 L37.4 61.6 H34.3" fill="none" stroke="#dcdcdc" stroke-width="0.7"/><path d="M32.6 61.4 H34.3 M34.3 59.8 V61.4" stroke="#dcdcdc" stroke-width="0.6"/>
</svg>
<span class="t" style="left:42.73px;top:51.00px;font-size:6.0px;font-weight:400;font-style:normal;color:#e2e2e2;transform:scaleX(0.893);">Move Tool</span>
<span class="t" style="left:83.71px;top:51.00px;font-size:6.0px;font-weight:400;font-style:normal;color:#e2e2e2;transform:scaleX(0.966);">V</span>
<span class="t" style="left:42.73px;top:62.00px;font-size:6.0px;font-weight:400;font-style:normal;color:#e2e2e2;transform:scaleX(0.901);">Artboard Tool</span>
<span class="t" style="left:83.71px;top:62.00px;font-size:6.0px;font-weight:400;font-style:normal;color:#e2e2e2;transform:scaleX(0.966);">V</span>
<div class="a" style="left:812px;top:152.3px;width:134px;height:200.2px;background:#535052;box-shadow:0 0 2px rgba(0,0,0,0.4);"></div>
<div class="a" style="left:812px;top:152.3px;width:134px;height:7px;background:#474446;"></div>
<div class="a" style="left:812px;top:159.3px;width:134px;height:14.7px;background:#444143;"></div>
<div class="a" style="left:812px;top:159.3px;width:25px;height:14.7px;background:#535052;"></div>
<div class="a" style="left:815px;top:180px;width:45px;height:8.8px;background:#454244;"></div>
<div class="a" style="left:815px;top:194.8px;width:67px;height:8.8px;background:#454244;"></div>
<div class="a" style="left:908.5px;top:194.8px;width:18.3px;height:8.8px;background:#454244;"></div>
<div class="a" style="left:927.3px;top:194.8px;width:8.4px;height:8.8px;background:#4a474a;"></div>
<div class="a" style="left:908.5px;top:209.8px;width:18.3px;height:8.8px;background:#454244;"></div>
<div class="a" style="left:927.3px;top:209.8px;width:8.4px;height:8.8px;background:#4a474a;"></div>
<div class="a" style="left:828px;top:222.9px;width:109.4px;height:15.9px;background:#676466;"></div>
<div class="a" style="left:812px;top:334px;width:134px;height:13.8px;background:#4f4c4e;"></div>
<div class="a" style="left:812px;top:347.8px;width:134px;height:4.7px;background:#474446;"></div>
<svg width="1024" height="554" viewBox="0 0 1024 554">
<path d="M1021 33.4 L1019.6 34.8 L1021 36.2 M1018.6 33.4 L1017.2 34.8 L1018.6 36.2" fill="none" stroke="#bdbdbd" stroke-width="0.6"/>
<path d="M985 40.2 H1004" stroke="#6a676a" stroke-width="0.6" stroke-dasharray="0.8 0.8"/>
<line x1="965" y1="104.5" x2="1024" y2="104.5" stroke="#434043" stroke-width="0.9"/>
<line x1="965" y1="156.5" x2="1024" y2="156.5" stroke="#434043" stroke-width="0.9"/>
<line x1="965" y1="207.5" x2="1024" y2="207.5" stroke="#434043" stroke-width="0.9"/>
<line x1="965" y1="244" x2="1024" y2="244" stroke="#434043" stroke-width="0.9"/>
<path d="M970.6 51.6 Q970 47.6 974.6 47.2 Q979.8 46.8 980 50.2 Q980.1 52.6 977.2 53 Q975.8 53.2 975.4 53.8 Q975 54.4 973.8 54 Q971 53.4 970.6 51.6Z" fill="#dcdcdc"/><circle cx="973.2" cy="50.2" r="0.8" fill="#555155"/><circle cx="975.4" cy="48.9" r="0.8" fill="#555155"/><circle cx="977.8" cy="50" r="0.8" fill="#555155"/><circle cx="976.4" cy="51.9" r="0.6" fill="#555155"/>
<rect x="970.8" y="61" width="8.6" height="8.4" fill="none" stroke="#dcdcdc" stroke-width="0.8"/><path d="M973.7 61 V69.4 M976.5 61 V69.4 M970.8 63.8 H979.4 M970.8 66.6 H979.4" stroke="#dcdcdc" stroke-width="0.6"/>
<defs><linearGradient id="rg" x1="0" y1="0" x2="1" y2="0"><stop offset="0" stop-color="#3c3c3c"/><stop offset="1" stop-color="#e4e4e4"/></linearGradient></defs>
<rect x="970.8" y="76.2" width="8.6" height="8.2" fill="url(#rg)" stroke="#cfcfcf" stroke-width="0.6"/>
<rect x="970.8" y="90.8" width="8.6" height="8.4" fill="none" stroke="#dcdcdc" stroke-width="0.8"/><path d="M973.2 90.8 V99.2 M977 90.8 V99.2 M970.8 93.4 H979.4 M970.8 96.6 H979.4" stroke="#dcdcdc" stroke-width="0.5"/>
<path d="M970.8 113.6 H979.6 M970.8 117 H979.6 M970.8 120.4 H979.6" stroke="#dcdcdc" stroke-width="0.6"/><circle cx="973.2" cy="113.6" r="1" fill="#535052" stroke="#dcdcdc" stroke-width="0.6"/><circle cx="977.4" cy="117" r="1" fill="#535052" stroke="#dcdcdc" stroke-width="0.6"/><circle cx="973.8" cy="120.4" r="1" fill="#535052" stroke="#dcdcdc" stroke-width="0.6"/>
<circle cx="975.2" cy="132" r="4.1" fill="none" stroke="#dcdcdc" stroke-width="0.8"/><path d="M978.1 129.1 A4.1 4.1 0 0 1 972.3 134.9 Z" fill="#dcdcdc"/>
<rect x="971" y="142.6" width="8.4" height="8.6" rx="1" fill="none" stroke="#dcdcdc" stroke-width="0.8"/><path d="M975.8 143 V147.4 H979" fill="none" stroke="#dcdcdc" stroke-width="0.8"/>
<rect x="971.2" y="164.6" width="2.6" height="2.2" fill="#dcdcdc"/><rect x="971.2" y="167.6" width="2.6" height="2.2" fill="#aaa"/><rect x="971.2" y="170.6" width="2.6" height="2.6" fill="#dcdcdc"/><path d="M979 165 H976.2 L975.8 168.2 Q979.4 167.6 979.2 170.4 Q979 173.2 975.6 172.6" fill="none" stroke="#dcdcdc" stroke-width="0.8"/>
<path d="M971.4 179.4 L979.4 183.5 L971.4 187.6 Z" fill="#dcdcdc"/>
<path d="M971 194.6 H979.4 V200.4 H974 L972.2 202.4 V200.4 H971 Z" fill="#dcdcdc"/>
<path d="M970.8 224 L973.6 216.4 L976.4 224 M971.9 221.2 H975.3" fill="none" stroke="#dcdcdc" stroke-width="0.7"/><path d="M978.6 216 V224.2" stroke="#dcdcdc" stroke-width="0.7"/>
<path d="M975.2 230 H978.8 M976.2 230 V238 M978 230 V238" stroke="#dcdcdc" stroke-width="0.8" fill="none"/><path d="M976.2 230 Q971.6 230.2 971.8 232.6 Q972 235 976.2 234.8Z" fill="#dcdcdc"/>
<path d="M934 154.8 L932.4 156.4 L934 158 M931.6 154.8 L930 156.4 L931.6 158" fill="none" stroke="#c8c8c8" stroke-width="0.6"/>
<path d="M940.2 154.8 L943.2 157.8 M943.2 154.8 L940.2 157.8" stroke="#d0d0d0" stroke-width="0.7"/>
<path d="M938.6 165.6 H943.4 M938.6 167 H943.4 M938.6 168.4 H943.4" stroke="#9a9a9a" stroke-width="0.7"/>
<circle cx="820.4" cy="183.6" r="1.9" fill="none" stroke="#dcdcdc" stroke-width="0.7"/><path d="M821.8 185 L823.6 186.8" stroke="#dcdcdc" stroke-width="0.8"/>
<path d="M855.4 183.8 L857 185.4 L858.6 183.8" fill="none" stroke="#b0b0b0" stroke-width="0.6"/>
<rect x="866" y="181.4" width="6.4" height="6.2" fill="none" stroke="#d4d4d4" stroke-width="0.7"/><path d="M867 186.8 L868.8 184.6 L870.2 186 L871.4 185 V186.8Z" fill="#d4d4d4"/>
<circle cx="883" cy="184.6" r="3.1" fill="none" stroke="#d8d8d8" stroke-width="0.7"/><path d="M885.2 182.4 A3.1 3.1 0 0 1 880.8 186.8Z" fill="#d8d8d8"/>
<path d="M894.6 181.6 H900.6 V182.8 M894.6 181.6 V182.8 M897.6 181.6 V188 M896.4 188 H898.8" fill="none" stroke="#e0e0e0" stroke-width="0.9"/>
<rect x="906" y="182" width="5.6" height="5.4" fill="none" stroke="#d8d8d8" stroke-width="0.7"/><path d="M905 182 H906 M911.6 182 H912.6 M905 187.4 H906 M911.6 187.4 H912.6 M906 181 V182 M911.6 181 V182 M906 187.4 V188.4 M911.6 187.4 V188.4" stroke="#d8d8d8" stroke-width="0.6"/>
<rect x="918.4" y="184.4" width="6" height="4.2" fill="#e0e0e0"/><path d="M919.8 184.4 V182.6 Q921.4 180.6 923 182.6" fill="none" stroke="#e0e0e0" stroke-width="0.8"/>
<rect x="930.6" y="185" width="3.4" height="4.8" fill="#454244"/><circle cx="932.3" cy="182.6" r="1.8" fill="#e8e8e8"/>
<line x1="812" y1="191" x2="946" y2="191" stroke="#4a474a" stroke-width="0.6"/>
<path d="M877.2 198.4 L878.8 200 L880.4 198.4" fill="none" stroke="#b0b0b0" stroke-width="0.6"/>
<path d="M929.8 198.6 L931.5 200.3 L933.2 198.6" fill="none" stroke="#b0b0b0" stroke-width="0.6"/>
<g fill="#bdbdbd"><rect x="832.2" y="210.4" width="2.2" height="2.2"/><rect x="836.6" y="210.4" width="2.2" height="2.2"/><rect x="834.4" y="212.6" width="2.2" height="2.2"/><rect x="832.2" y="214.8" width="2.2" height="2.2"/><rect x="836.6" y="214.8" width="2.2" height="2.2"/></g><rect x="832.2" y="210.4" width="6.6" height="6.6" fill="none" stroke="#bdbdbd" stroke-width="0.4"/>
<path d="M844.4 217.8 L846 215.6 L850.6 210.6" stroke="#bcbcbc" stroke-width="1"/><path d="M843.8 218.4 L845 216.4 L846.2 217.2Z" fill="#bcbcbc"/>
<path d="M855.8 213.8 H863 M859.4 210.2 V217.4 M856.8 212.6 L855.6 213.8 L856.8 215 M862 212.6 L863.2 213.8 L862 215 M858.2 211.2 L859.4 210 L860.6 211.2 M858.2 216.4 L859.4 217.6 L860.6 216.4" fill="none" stroke="#dadada" stroke-width="0.9"/>
<path d="M869.2 210 V216.6 H875.6 M867 212.2 H873.4 V218.6" fill="none" stroke="#d0d0d0" stroke-width="0.7"/><path d="M872.6 211.6 L874.8 210" stroke="#d0d0d0" stroke-width="0.5"/>
<rect x="880" y="213.6" width="6" height="4.6" fill="#e6e6e6"/><path d="M881.4 213.6 V212 Q883 209.6 884.6 212 V213.6" fill="none" stroke="#e6e6e6" stroke-width="0.8"/><rect x="882.5" y="215.2" width="1" height="1.4" fill="#535052"/>
<path d="M929.8 213.6 L931.5 215.3 L933.2 213.6" fill="none" stroke="#b0b0b0" stroke-width="0.6"/>
<line x1="812" y1="221.6" x2="946" y2="221.6" stroke="#474446" stroke-width="0.8"/>
<line x1="828" y1="238.8" x2="937.4" y2="238.8" stroke="#4a474a" stroke-width="0.7"/>
<line x1="828" y1="255.3" x2="937.4" y2="255.3" stroke="#4a474a" stroke-width="0.7"/>
<line x1="828" y1="271.8" x2="937.4" y2="271.8" stroke="#4a474a" stroke-width="0.7"/>
<line x1="827.6" y1="222" x2="827.6" y2="272" stroke="#4a474a" stroke-width="0.6"/>
<path d="M817 231.2 Q820.4 228.0 823.8 231.2 Q820.4 234.39999999999998 817 231.2Z" fill="none" stroke="#e0e0e0" stroke-width="0.8"/><circle cx="820.4" cy="231.2" r="1.2" fill="#e0e0e0"/>
<path d="M817 248 Q820.4 244.8 823.8 248 Q820.4 251.2 817 248Z" fill="none" stroke="#e0e0e0" stroke-width="0.8"/><circle cx="820.4" cy="248" r="1.2" fill="#e0e0e0"/>
<path d="M817 264.3 Q820.4 261.1 823.8 264.3 Q820.4 267.5 817 264.3Z" fill="none" stroke="#e0e0e0" stroke-width="0.8"/><circle cx="820.4" cy="264.3" r="1.2" fill="#e0e0e0"/>
<path d="M835.8 229.4 V232.6 H834.4 M835 231.8 L834.2 232.6 L835 233.4" fill="none" stroke="#c8c8c8" stroke-width="0.6"/>
<rect x="838" y="224.2" width="18.5" height="13.3" fill="#0a0a0a" stroke="#e8e8e8" stroke-width="0.8"/>
<rect x="839" y="225.2" width="4" height="11.4" fill="#e8e8e8"/><rect x="850.4" y="225.2" width="5.2" height="11.2" fill="#cfcfcf"/><rect x="851.6" y="227.4" width="2.6" height="3" fill="#222"/><rect x="846" y="230" width="1.4" height="4" fill="#bbb"/><rect x="851" y="232" width="3" height="2.4" fill="#444"/>
<rect x="831" y="242.1" width="15.8" height="11" fill="#f0f0f0"/><g fill="#c8c8c8"><rect x="833" y="244.2" width="2" height="2"/><rect x="831" y="246.2" width="2" height="2"/><rect x="835" y="246.2" width="2" height="2"/><rect x="833" y="248.2" width="2" height="2"/><rect x="831" y="250.2" width="2" height="2"/><rect x="835" y="250.2" width="2" height="2"/></g>
<rect x="838.6" y="245.4" width="8.2" height="7.7" fill="#3c3a3c"/><path d="M840.6 247.4 H844.8 M840.6 251.2 H844.8 M841.2 247.4 V251.2 M844.2 247.4 V251.2" stroke="#dadada" stroke-width="0.6"/>
<rect x="831" y="258.6" width="16" height="11.4" fill="#e8d3bd"/>
<rect x="923.8" y="264" width="5.2" height="3.8" fill="none" stroke="#d4d4d4" stroke-width="0.7"/><path d="M924.8 264 V262.6 Q926.4 260.6 928 262.6 V264" fill="none" stroke="#d4d4d4" stroke-width="0.7"/><rect x="925.9" y="265.2" width="1" height="1.4" fill="#d4d4d4"/>
<line x1="812" y1="333.6" x2="946" y2="333.6" stroke="#454244" stroke-width="0.8"/>
<g fill="none" stroke="#8a8a8a" stroke-width="0.8"><rect x="832.2" y="339.6" width="4.2" height="3.2" rx="1.6"/><rect x="836.4" y="339.6" width="4.2" height="3.2" rx="1.6"/></g>
<text x="848" y="344.4" font-family="Liberation Serif" font-style="italic" font-size="7.4" fill="#dcdcdc">fx</text><rect x="855" y="345.6" width="1.4" height="1" fill="#e0e0e0"/>
<rect x="863" y="338.2" width="7.4" height="6" fill="#dcdcdc"/><circle cx="866.7" cy="341.2" r="1.8" fill="#4f4c4e"/>
<circle cx="882.4" cy="341.2" r="3" fill="none" stroke="#d8d8d8" stroke-width="0.7"/><path d="M884.5 339.1 A3 3 0 0 1 880.3 343.3Z" fill="#d8d8d8"/><rect x="885" y="345.6" width="1.4" height="1" fill="#e0e0e0"/>
<path d="M894 338.6 H897 L897.8 339.4 H901.4 V344.2 H894Z" fill="#dcdcdc"/>
<rect x="909.4" y="338" width="6.6" height="6.4" fill="none" stroke="#dcdcdc" stroke-width="0.7"/><path d="M912.7 339.4 V343 M910.9 341.2 H914.5" stroke="#dcdcdc" stroke-width="0.7"/>
<path d="M923.8 339 H929.8 M926 339 V338 H927.6 V339 M924.4 339.6 L925 344.4 H928.6 L929.2 339.6" fill="none" stroke="#c8c8c8" stroke-width="0.7"/><path d="M926 340.4 V343.6 M927.6 340.4 V343.6" stroke="#c8c8c8" stroke-width="0.5"/>
<path d="M142 547.6 L143.6 549.4 L142 551.2" fill="none" stroke="#c8c8c8" stroke-width="0.6"/><path d="M153 547.8 L151.6 549.4 L153 551" fill="none" stroke="#8a8a8a" stroke-width="0.5"/>
<path d="M957.6 543.2 L959.2 541.6 M958.8 543.2 L959.6 542.4" stroke="#9a9a9a" stroke-width="0.5"/>
<path d="M955.4 549.2 L957 550.6 L955.4 552" fill="none" stroke="#8a8a8a" stroke-width="0.5"/>
</svg>
<span class="t" style="left:984.73px;top:49.00px;font-size:5.9px;font-weight:700;font-style:normal;color:#e2e2e2;transform:scaleX(0.899);">Color</span>
<span class="t" style="left:984.75px;top:64.00px;font-size:5.9px;font-weight:700;font-style:normal;color:#e2e2e2;transform:scaleX(0.861);">Swatches</span>
<span class="t" style="left:984.74px;top:79.00px;font-size:5.9px;font-weight:700;font-style:normal;color:#e2e2e2;transform:scaleX(0.892);">Gradients</span>
<span class="t" style="left:984.73px;top:93.00px;font-size:5.9px;font-weight:700;font-style:normal;color:#e2e2e2;transform:scaleX(0.909);">Patterns</span>
<span class="t" style="left:984.73px;top:115.00px;font-size:5.9px;font-weight:700;font-style:normal;color:#e2e2e2;transform:scaleX(0.914);">Properties</span>
<span class="t" style="left:984.73px;top:130.00px;font-size:5.9px;font-weight:700;font-style:normal;color:#e2e2e2;transform:scaleX(0.931);">Adjustme...</span>
<span class="t" style="left:984.74px;top:145.00px;font-size:5.9px;font-weight:700;font-style:normal;color:#e2e2e2;transform:scaleX(0.893);">Libraries</span>
<span class="t" style="left:984.72px;top:167.00px;font-size:5.9px;font-weight:700;font-style:normal;color:#e2e2e2;transform:scaleX(0.934);">History</span>
<span class="t" style="left:984.74px;top:182.00px;font-size:5.9px;font-weight:700;font-style:normal;color:#e2e2e2;transform:scaleX(0.890);">Actions</span>
<span class="t" style="left:984.73px;top:196.00px;font-size:5.9px;font-weight:700;font-style:normal;color:#e2e2e2;transform:scaleX(0.911);">Comments</span>
<span class="t" style="left:984.73px;top:218.00px;font-size:5.9px;font-weight:700;font-style:normal;color:#e2e2e2;transform:scaleX(0.899);">Character</span>
<span class="t" style="left:984.73px;top:232.00px;font-size:5.9px;font-weight:700;font-style:normal;color:#e2e2e2;transform:scaleX(0.911);">Paragraph</span>
<span class="t" style="left:816.44px;top:165.00px;font-size:5.9px;font-weight:700;font-style:normal;color:#eaeaea;transform:scaleX(0.896);">Layers</span>
<span class="t" style="left:841.52px;top:165.00px;font-size:5.9px;font-weight:400;font-style:normal;color:#b4b4b4;transform:scaleX(0.946);">Channels</span>
<span class="t" style="left:873.70px;top:165.00px;font-size:5.9px;font-weight:400;font-style:normal;color:#b4b4b4;transform:scaleX(1.008);">Paths</span>
<span class="t" style="left:825.53px;top:184.00px;font-size:5.6px;font-weight:400;font-style:normal;color:#dedede;transform:scaleX(0.977);">Kind</span>
<span class="t" style="left:818.03px;top:198.00px;font-size:5.8px;font-weight:400;font-style:normal;color:#e2e2e2;transform:scaleX(0.939);">Normal</span>
<span class="t" style="left:886.14px;top:198.00px;font-size:5.8px;font-weight:400;font-style:normal;color:#c4c4c4;transform:scaleX(0.914);">Opacity:</span>
<span class="t" style="left:909.30px;top:198.00px;font-size:5.8px;font-weight:400;font-style:normal;color:#e2e2e2;transform:scaleX(1.025);">100%</span>
<span class="t" style="left:814.83px;top:212.00px;font-size:5.8px;font-weight:400;font-style:normal;color:#c4c4c4;transform:scaleX(0.941);">Lock:</span>
<span class="t" style="left:897.76px;top:213.00px;font-size:5.8px;font-weight:400;font-style:normal;color:#c4c4c4;transform:scaleX(0.830);">Fill:</span>
<span class="t" style="left:909.30px;top:213.00px;font-size:5.8px;font-weight:400;font-style:normal;color:#e2e2e2;transform:scaleX(1.025);">100%</span>
<span class="t" style="left:860.45px;top:229.00px;font-size:5.9px;font-weight:400;font-style:normal;color:#e8e8e8;transform:scaleX(0.849);">G_62472305_..._ZP_4 copy</span>
<span class="t" style="left:851.31px;top:246.00px;font-size:5.9px;font-weight:400;font-style:normal;color:#e2e2e2;transform:scaleX(0.969);text-decoration:underline;text-decoration-thickness:0.5px;text-underline-offset:0.8px;">Rectangle 1</span>
<span class="t" style="left:852.53px;top:262.00px;font-size:5.9px;font-weight:400;font-style:italic;color:#e2e2e2;transform:scaleX(0.914);">Background</span>
<span class="t" style="left:26.33px;top:548.00px;font-size:5.4px;font-weight:700;font-style:normal;color:#e6e6e6;transform:scaleX(0.985);">116.1%</span>
<span class="t" style="left:62.74px;top:548.00px;font-size:5.4px;font-weight:400;font-style:normal;color:#d6d6d6;transform:scaleX(0.975);">1040 px x 670 px (300 ppi)</span>
</body></html>
